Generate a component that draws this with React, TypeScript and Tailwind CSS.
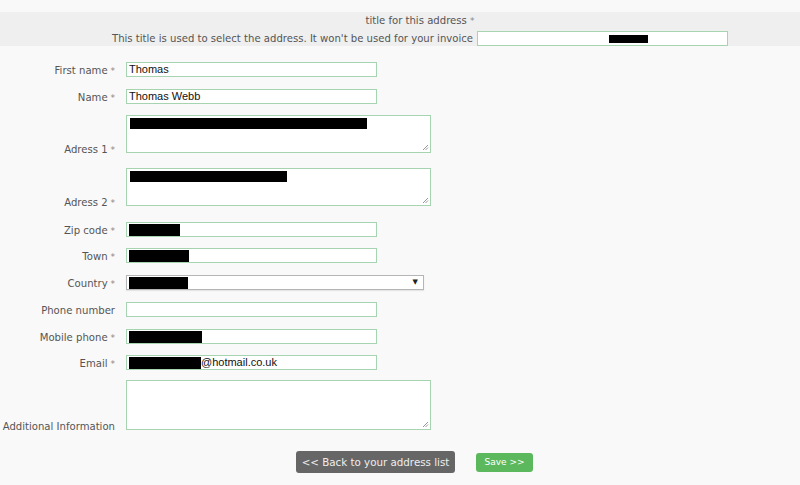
import React from "react";

const font = { fontFamily: '"DejaVu Sans", Verdana, sans-serif' };

function Redact({ w }: { w: number }) {
  return <span className="inline-block h-[12px] bg-black align-middle" style={{ width: w }} />;
}

function Field({ children, w = "w-[251px]" }: { children?: React.ReactNode; w?: string }) {
  return (
    <div className={`${w} h-[15px] border border-[#a6d4b0] bg-white flex items-center pl-[2px] text-[11px] text-[#111] leading-none font-['Liberation_Sans',Arial,sans-serif]`}>
      {children}
    </div>
  );
}

function Area({ h, children }: { h: string; children?: React.ReactNode }) {
  return (
    <div className={`relative w-[305px] ${h} border border-[#a6d4b0] bg-white pl-[2px] pt-[2px]`}>
      {children}
      <svg className="absolute right-[1px] bottom-[1px]" width="7" height="7" viewBox="0 0 7 7">
        <path d="M6 1L1 6M6 3.5L3.5 6" stroke="#999" strokeWidth="1" />
      </svg>
    </div>
  );
}

function Row({ label, req, children, mt, end }: { label: string; req?: boolean; children: React.ReactNode; mt: string; end?: boolean }) {
  return (
    <div className={`flex ${end ? "items-end" : "items-center"} ${mt}`}>
      <div className={`w-[116px] pr-[1px] text-right text-[10.1px] text-[#555] leading-none whitespace-nowrap ${end ? "mb-[-2px]" : "pt-[3px]"}`}>
        {label}
        {req && <span className="text-[9px] text-[#888]"> *</span>}
      </div>
      <div className="ml-[10px]">{children}</div>
    </div>
  );
}

export default function App() {
  return (
    <div className="w-[800px] h-[485px] bg-[#f9f9f9] overflow-hidden" style={font}>
      <div className="mt-[12px] h-[34px] bg-[#efefef] flex flex-col items-center pl-[40px] text-[10.1px] text-[#555] leading-none">
        <div className="mt-[4px]">
          title for this address <span className="text-[9px] text-[#888]">*</span>
        </div>
        <div className="mt-[5px] flex items-center">
          <span>This title is used to select the address. It won't be used for your invoice</span>
          <div className="ml-[4px] w-[251px] h-[15px] border border-[#a6d4b0] bg-white flex items-center justify-center">
            <span className="inline-block w-[39px] h-[8px] bg-black ml-[52px]" />
          </div>
        </div>
      </div>

      <div className="flex flex-col">
        <Row label="First name" req mt="mt-[16px]">
          <Field>Thomas</Field>
        </Row>
        <Row label="Name" req mt="mt-[12px]">
          <Field>Thomas Webb</Field>
        </Row>
        <Row label="Adress 1" req mt="mt-[11px]" end>
          <Area h="h-[38px]">
            <span className="block w-[237px] h-[11px] bg-black ml-[1px]" />
          </Area>
        </Row>
        <Row label="Adress 2" req mt="mt-[15px]" end>
          <Area h="h-[38px]">
            <span className="block w-[157px] h-[11px] bg-black ml-[1px]" />
          </Area>
        </Row>
        <Row label="Zip code" req mt="mt-[16px]">
          <Field>
            <Redact w={51} />
          </Field>
        </Row>
        <Row label="Town" req mt="mt-[11px]">
          <Field>
            <Redact w={60} />
          </Field>
        </Row>
        <Row label="Country" req mt="mt-[12px]">
          <div className="w-[298px] h-[15px] border border-[#b5b5b5] bg-white flex items-center justify-between pl-[2px] pr-[5px] shadow-[0_1px_1px_rgba(0,0,0,0.08)]">
            <Redact w={59} />
            <span className="text-[7px] text-[#222] leading-none">▼</span>
          </div>
        </Row>
        <Row label="Phone number" mt="mt-[12px]">
          <Field />
        </Row>
        <Row label="Mobile phone" req mt="mt-[12px]">
          <Field>
            <Redact w={73} />
          </Field>
        </Row>
        <Row label="Email" req mt="mt-[11px]">
          <Field>
            <Redact w={72} />
            <span>@hotmail.co.uk</span>
          </Field>
        </Row>
        <Row label="Additional Information" mt="mt-[10px]" end>
          <Area h="h-[50px]" />
        </Row>
      </div>

      <div className="mt-[21px] flex items-center pl-[296px]">
        <button className="w-[159px] h-[22px] rounded-[3px] bg-[#666666] text-[#eeeeee] text-[10.3px] leading-none">
          &lt;&lt; Back to your address list
        </button>
        <button className="ml-[21px] w-[57px] h-[19px] rounded-[3px] bg-[#5cb85c] text-white text-[9px] leading-none">
          Save &gt;&gt;
        </button>
      </div>
    </div>
  );
}
